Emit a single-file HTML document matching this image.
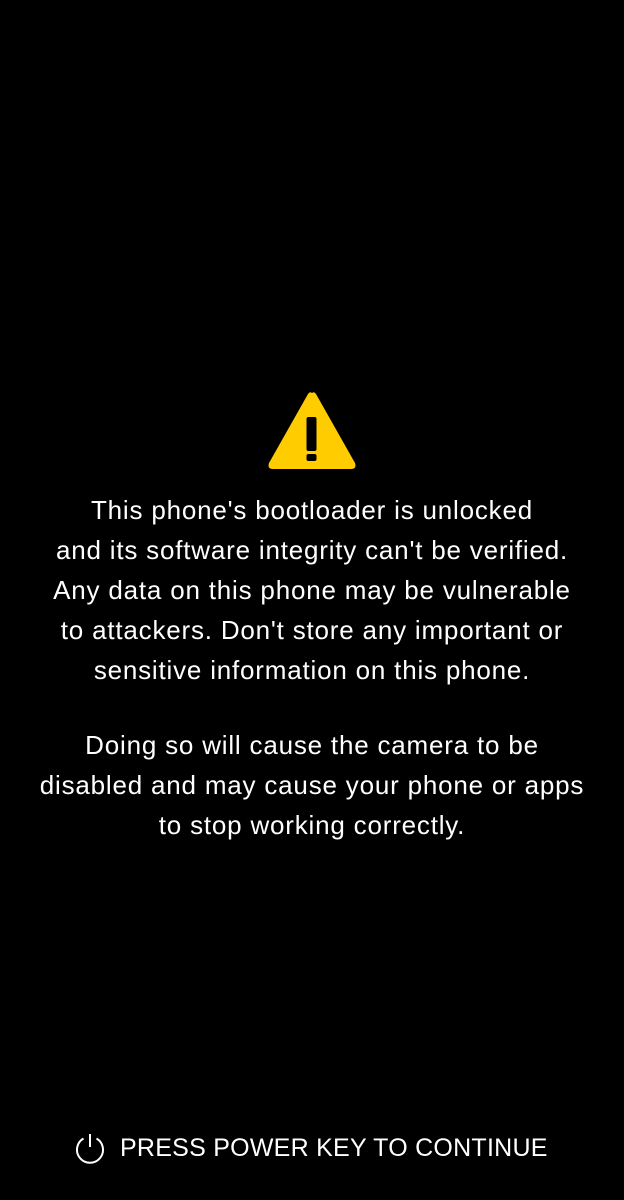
<!DOCTYPE html>
<html><head><meta charset="utf-8"><style>
html,body{margin:0;padding:0;background:#000;width:624px;height:1200px;overflow:hidden}
body{position:relative;font-family:"Liberation Sans",sans-serif;color:#fff}
.t{position:absolute;left:0;width:624px;text-align:center;font-size:26px;letter-spacing:0.8px;line-height:40px;white-space:nowrap}
.b{position:absolute;left:120px;top:1130px;font-size:25px;letter-spacing:0.25px;line-height:36px;white-space:nowrap}
</style></head><body>
<svg style="position:absolute;left:266px;top:389px" width="92" height="84" viewBox="0 0 92 84">
<path d="M46 4 Q48 2 50 5 L89 74 Q91 80 85 80 L7 80 Q1 80 3 74 L42 5 Q44 2 46 4Z" fill="#ffcc00"/>
<rect x="40.5" y="28" width="10" height="34" rx="2" fill="#000"/>
<rect x="40.5" y="65" width="10" height="7" rx="2" fill="#000"/>
</svg>
<div class="t" style="top:490px">This phone's bootloader is unlocked<br>and its software integrity can't be verified.<br>Any data on this phone may be vulnerable<br>to attackers. Don't store any important or<br>sensitive information on this phone.</div>
<div class="t" style="top:725px">Doing so will cause the camera to be<br>disabled and may cause your phone or apps<br>to stop working correctly.</div>
<svg style="position:absolute;left:73px;top:1131px" width="34" height="34" viewBox="0 0 34 34">
<path d="M10.5 7.5 A13 13 0 1 0 23.5 7.5" fill="none" stroke="#fff" stroke-width="2"/>
<line x1="17" y1="3" x2="17" y2="16" stroke="#fff" stroke-width="2"/>
</svg>
<div class="b">PRESS POWER KEY TO CONTINUE</div>
</body></html>
